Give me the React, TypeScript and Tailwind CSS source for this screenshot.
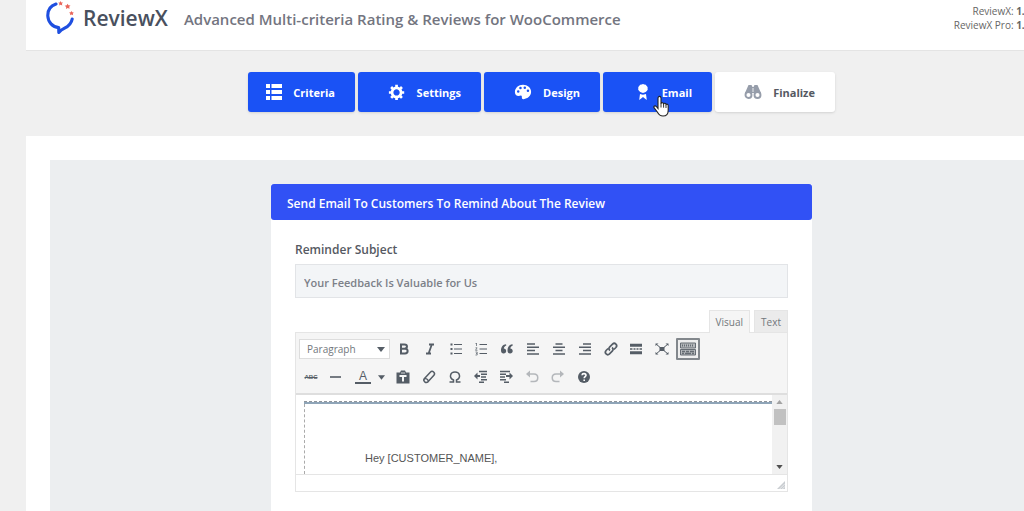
import type { ReactNode } from 'react';

type StepProps = { label: string; width: string; icon: ReactNode; active?: boolean };

function Step({ label, width, icon, active = true }: StepProps) {
  const tone = active ? 'bg-[#1a52f5] text-white' : 'bg-white text-[#555962]';
  return (
    <button
      type="button"
      className={`flex h-10 items-center justify-end gap-[11px] rounded-[3px] pr-5 text-[11px] leading-4 font-bold shadow-sm ${width} ${tone}`}
    >
      {icon}
      <span className="pt-[2px]">{label}</span>
    </button>
  );
}

const ListIcon = () => (
  <svg viewBox="0 0 16 16" className="h-4 w-4" fill="currentColor" aria-hidden="true">
    <path d="M0 0h4v4H0zM5.500 0H16v4H5.500zM0 6h4v4H0zM5.500 6H16v4H5.500zM0 12h4v4H0zM5.500 12H16v4H5.500z" />
  </svg>
);

const GearIcon = () => (
  <svg viewBox="0 0 20 20" className="h-[18px] w-[18px]" fill="currentColor" aria-hidden="true">
    <path d="M18 12h-2.180c-.17.700-.44 1.350-.81 1.930l1.540 1.540-2.100 2.100-1.540-1.540c-.58.360-1.230.630-1.910.790V19H8v-2.180c-.68-.16-1.330-.43-1.910-.79l-1.540 1.540-2.120-2.120 1.540-1.540c-.36-.58-.63-1.230-.79-1.910H1V9.030h2.170c.16-.7.440-1.350.800-1.940L2.430 5.550l2.100-2.100 1.540 1.540c.58-.37 1.240-.64 1.930-.81V2h3v2.180c.68.160 1.330.430 1.910.790l1.540-1.540 2.120 2.120-1.540 1.540c.36.590.640 1.240.800 1.940H18V12zm-8.500 2c1.900 0 3.500-1.600 3.500-3.500S11.400 7 9.500 7 6 8.600 6 10.500 7.600 14 9.500 14z" />
  </svg>
);

const PaletteIcon = () => (
  <svg viewBox="0 0 20 20" className="h-[18px] w-[18px]" fill="currentColor" aria-hidden="true">
    <path fillRule="evenodd" d="M10 2C5 2 1 5.600 1 10c0 3 1.700 4.500 4 4.500 1.500 0 2.400-.8 3.200-.4 1 .5.200 2 .7 3.100.4.700 1 .9 1.700.8C15.300 17.500 19 14.200 19 9.800 19 5.200 15 2 10 2zM4.700 8a1.400 1.400 0 1 0 0 2.800 1.400 1.400 0 0 0 0-2.800zM7.200 4.200a1.400 1.400 0 1 0 0 2.800 1.400 1.400 0 0 0 0-2.800zM12 4a1.400 1.400 0 1 0 0 2.800A1.400 1.400 0 0 0 12 4zM15.500 7.200a1.400 1.400 0 1 0 0 2.800 1.400 1.400 0 0 0 0-2.800z" />
  </svg>
);

const AwardIcon = () => (
  <svg viewBox="0 0 16 16" className="h-4 w-4" fill="currentColor" aria-hidden="true">
    <path d="M8 0l1.300.5 1.500.2.900 1.200.9 1.200v1.500l.1 1.200-.9 1.300-1.100 1-1.300.5L8 9.100l-1.400-.5-1.400-.5-1-1-1-1.300.1-1.200V3.100l.9-1.200.9-1.200L6.700.5z" />
    <path d="M5 10l3 .8 3-.8.800 6-2.300-1.800L8 13l-1.500 1.200L4.200 16z" />
  </svg>
);

const BinocularsIcon = () => (
  <svg viewBox="0 0 18 16" className="h-4 w-[18px]" aria-hidden="true">
    <path fill="#969daa" d="M4.500 1h3l1 2h1l1-2h3L17 9v3h-6V9H7v3H1V9z" />
    <circle cx="4.500" cy="11" r="3" fill="#fff" stroke="#969daa" strokeWidth="1.900" />
    <circle cx="13.500" cy="11" r="3" fill="#fff" stroke="#969daa" strokeWidth="1.900" />
    <path d="M9 4v4" stroke="#fff" strokeWidth=".8" />
  </svg>
);

const Logo = () => (
  <svg viewBox="0 0 28 34" className="h-[34px] w-7" aria-hidden="true">
    <path d="M10 4C4.500 5.800 1.600 10.500 1.800 16c.3 6 4.700 11 10.900 11.600L12.800 32.500c1.700-2 3.200-3 5.800-4.300 4.500-2.300 7-5.600 7.600-9.200" fill="none" stroke="#1f4fe0" strokeWidth="3.100" strokeLinecap="round" strokeLinejoin="round" />
    <path fill="#e9655a" d="M14.500 1l.8 1.400 1.700.2-1.100 1.200.4 1.700-1.700-.7-1.500.7.300-1.700L12.300 2.600l1.500-.2zM21.500 3.800l1 1.500 2 .1-1.300 1.400.4 2-1.900-.8-1.700 1 .2-2-1.500-1.300 2-.4zM25.500 11l.8 1.300 1.500.2-1 1.200.3 1.600-1.500-.7-1.500.7.200-1.600-1.200-1.200 1.600-.2z" />
  </svg>
);

const Cursor = () => (
  <svg viewBox="0 0 16 22" className="pointer-events-none absolute top-[23px] left-[50px] h-[22px] w-4" aria-hidden="true">
    <path d="M5 13.500V3.200C5 .8 8 .8 8 3.200v5.300c.4-1.300 2.500-1 2.600.4.600-1 2.300-.7 2.400.6.900-.7 2.200-.2 2.200 1.200v4.500c0 3.500-1.700 5.800-5.200 5.800-3 0-4.300-1.500-5.500-3.800L1 12.700c-.7-1.600 1.200-2.500 2.300-1.200z" fill="#fff" stroke="#222" strokeWidth="1.100" />
    <path d="M8 8v4.500M10.600 9v3.700M13 10v3" stroke="#333" strokeWidth="1" />
  </svg>
);

function Tool({ name, children }: { name: string; children: ReactNode }) {
  return (
    <button type="button" aria-label={name} title={name} className="flex h-6 w-6 items-center justify-center text-[#555d66]">
      <svg viewBox="0 0 16 16" className="h-4 w-4" fill="none" stroke="currentColor" strokeWidth="1.500" aria-hidden="true">
        {children}
      </svg>
    </button>
  );
}

function ToolbarTop() {
  return (
    <div className="flex items-center">
      <div className="relative mr-[2px] flex items-center">
        <select aria-label="Block format" className="h-5 w-[91px] appearance-none border border-[#dddddd] bg-white pl-[7px] text-[10px] leading-4 text-[#72777c]">
          <option>Paragraph</option>
        </select>
        <svg viewBox="0 0 8 5" className="pointer-events-none absolute right-[5px] h-[5px] w-2" fill="#555d66" aria-hidden="true">
          <path d="M0 0h8L4 5z" />
        </svg>
      </div>
      <div className="flex w-[308px] items-center justify-between">
        <Tool name="Bold">
          <path d="M5 3.500h3.500c3.300 0 3.300 4.200 0 4.200H5zM5 7.700h4c3.500 0 3.500 4.800 0 4.800H5z" strokeWidth="2" />
        </Tool>
        <Tool name="Italic">
          <path d="M7 3.500h5M4 12.500h5M9.800 3.500l-3.200 9" strokeWidth="1.800" />
        </Tool>
        <Tool name="Bulleted list">
          <path d="M6 3.500h8M6 8h8M6 12.500h8" strokeWidth="1" />
          <path d="M2.500 3.500h2M2.500 8h2M2.500 12.500h2" strokeWidth="1.800" />
        </Tool>
        <Tool name="Numbered list">
          <path d="M6.500 3.500h7.500M6.500 8h7.500M6.500 12.500h7.500" strokeWidth="1" />
          <path d="M3.500 2v3M2.500 2.500h1M2.500 6.800h1.600L2.500 9.300h2M2.500 11h1.700v3H2.500M3 12.500h1" strokeWidth=".7" />
        </Tool>
        <Tool name="Blockquote">
          <path d="M7 3.200C4 3.500 2 5.700 2 9.500c0 1.800 1 3 2.600 3s2.600-1 2.600-2.500S6.200 7.500 4.800 7.500C5 6 5.800 5 7.300 4.500zM13.500 3.200c-3 .3-5 2.500-5 6.300 0 1.800 1 3 2.600 3s2.600-1 2.600-2.500-1-2.500-2.400-2.500c.2-1.500 1-2.500 2.500-3z" fill="currentColor" stroke="none" />
        </Tool>
        <Tool name="Align left">
          <path d="M2 3h8M2 6.300h12M2 9.600h8M2 13h12" />
        </Tool>
        <Tool name="Align center">
          <path d="M4.500 3h7M2 6.300h12M4.500 9.600h7M2 13h12" />
        </Tool>
        <Tool name="Align right">
          <path d="M6 3h8M2 6.300h12M6 9.600h8M2 13h12" />
        </Tool>
        <Tool name="Insert link">
          <path d="M7 9.500c-1.500-1.200-1.200-2.700-.2-3.700l2.700-2.700c2.300-2.200 5.600 1 3.400 3.400l-2 2M9 6.500c1.500 1.200 1.200 2.700.2 3.700l-2.700 2.700c-2.300 2.200-5.600-1-3.400-3.400l2-2" strokeWidth="1.700" />
        </Tool>
        <Tool name="Insert read more tag">
          <path d="M2 4.200h12M2 11.800h12" strokeWidth="3" />
          <path d="M2 8h2.500M5.500 8h2M8.500 8h2M11.500 8H14" strokeWidth="1.300" />
        </Tool>
        <Tool name="Fullscreen">
          <path d="M2 3l12 10M14 3L2 13" strokeWidth="1" />
          <path d="M5.500 6h5v4h-5zM1.500 2.500H4.500L1.500 5zM14.500 2.500h-3l3 2.500zM1.500 13.500h3l-3-2.500zM14.500 13.500h-3l3-2.500z" fill="currentColor" stroke="none" />
        </Tool>
        <button type="button" aria-label="Toolbar toggle" title="Toolbar toggle" aria-pressed="true" className="flex h-[22px] w-6 items-center justify-center rounded-[1px] border-2 border-[#82878c] bg-[#eeeeee] text-[#666c73]">
          <svg viewBox="0 0 16 14" className="h-[14px] w-4" fill="none" stroke="currentColor" aria-hidden="true">
            <path d="M.5 1h15v5H.5zM.5 7.500h15v5.500H.5z" fill="#b5b8bb" />
            <path d="M2 3.500h12" strokeDasharray="1 1" strokeWidth="2" />
            <path d="M2 9.500h3M6 9.500h3M10 9.500h4M2 11.500h2M5 11.500h6M12 11.500h2" strokeWidth="1.300" />
          </svg>
        </button>
      </div>
    </div>
  );
}

function ToolbarBottom() {
  return (
    <div className="flex items-center">
      <div className="flex w-[90px] items-center">
        <button type="button" aria-label="Strikethrough" className="flex h-6 w-6 items-center justify-center text-[#555d66]">
          <span className='font-["Liberation_Sans",sans-serif] text-[6px] leading-none font-bold line-through'>ABC</span>
        </button>
        <Tool name="Horizontal line">
          <path d="M3 8h11" strokeWidth="1.600" />
        </Tool>
        <button type="button" aria-label="Text color" className="ml-1 flex h-6 w-6 flex-col items-center justify-center text-[#555d66]">
          <span className='font-["Liberation_Sans",sans-serif] text-[12px] leading-3'>A</span>
          <span className="h-[2px] w-4 bg-[#555d66]" />
        </button>
        <button type="button" aria-label="Text color options" className="flex h-6 w-3 items-center justify-center">
          <svg viewBox="0 0 8 5" className="h-[5px] w-[7px]" fill="#555d66" aria-hidden="true">
            <path d="M0 0h8L4 5z" />
          </svg>
        </button>
      </div>
      <div className="ml-[2px] flex w-[205px] justify-between">
        <Tool name="Paste as text">
          <path d="M1.500 3.500H5L6 1.500h4l1 2h3.500v11h-13z" fill="currentColor" stroke="none" />
          <path d="M4.500 7h7M8 7v5.500" stroke="#f5f5f5" strokeWidth="2" />
          <path d="M6 4h4" stroke="#f5f5f5" strokeWidth=".8" />
        </Tool>
        <Tool name="Clear formatting">
          <path d="M9.300 3.200c1-1 2.300-1.100 3.300-.2 1.100 1 1.200 2.200.3 3.300l-5.700 6.300c-1 1-2.300 1.200-3.500.2-1.100-1-1.100-2.300-.2-3.300z" strokeWidth="1.500" />
          <path d="M3.600 9.600c2.200-.2 3.600 1 3.900 3" strokeWidth="1.300" />
        </Tool>
        <Tool name="Special character">
          <path d="M2.500 13h4v-2C1.500 8.500 3.200 3 8 3s6.500 5.500 1.500 8v2h4" />
        </Tool>
        <Tool name="Decrease indent">
          <path d="M6 2.500h8M8 5.200h6M8 8h5M8 10.700h6M6 13.300h5" />
          <path d="M2.500 7H7" strokeWidth="2" />
          <path d="M1 7l3.500-3.500v7z" fill="currentColor" stroke="none" />
        </Tool>
        <Tool name="Increase indent">
          <path d="M2 2.500h10M2 5.200h6M2 8h5M2 10.700h6M6 13.300h5" />
          <path d="M8 7h5" strokeWidth="2" />
          <path d="M15 7l-3.500-3.500v7z" fill="currentColor" stroke="none" />
        </Tool>
        <Tool name="Undo">
          <g opacity=".4">
            <path d="M4 5h6c5 0 5 7.500 0 7.500H6.500" />
            <path d="M2 5l4-3.500v7z" fill="currentColor" stroke="none" />
          </g>
        </Tool>
        <Tool name="Redo">
          <g opacity=".4">
            <path d="M12 5H6c-5 0-5 7.500 0 7.500h3.500" />
            <path d="M14 5l-4-3.500v7z" fill="currentColor" stroke="none" />
          </g>
        </Tool>
        <Tool name="Keyboard shortcuts">
          <circle cx="8" cy="8" r="6" fill="currentColor" stroke="none" />
          <path d="M6 6.300c.2-2.400 4-2.100 4 0C10 7.700 8.200 7.700 8.200 9.300M8.200 10.500v1.600" stroke="#fff" strokeWidth="1.600" />
        </Tool>
      </div>
    </div>
  );
}

function Editor() {
  return (
    <div className="mt-3">
      <div className="flex justify-end gap-1 text-[10px] leading-4 text-[#72777c]">
        <button type="button" className="relative -mb-px h-[23px] border border-b-0 border-[#e5e5e5] bg-[#f5f5f5] px-[6px]">Visual</button>
        <button type="button" className="h-[22px] border border-b-0 border-[#e5e5e5] bg-[#ebebeb] px-[6px]">Text</button>
      </div>
      <div className="border border-[#e5e5e5]">
        <div className="flex flex-col gap-1 border-b-2 border-[#dedede] bg-[#f5f5f5] px-[3px] py-1">
          <ToolbarTop />
          <ToolbarBottom />
        </div>
        <div className="flex h-[79px] overflow-hidden">
          <div className="flex flex-1 flex-col pt-[6px] pl-2">
            <div className="border-t border-dashed border-[#8f959c]" />
            <div className="flex-1 border-t-2 border-t-[#8fa5b8]">
              <div className="h-full border-l border-dashed border-[#aaaaaa] pt-[46px] pl-[60px]">
                <p className='font-["Liberation_Sans",sans-serif] text-[11px] leading-4 text-[#555555]'>Hey [CUSTOMER_NAME],</p>
              </div>
            </div>
          </div>
          <div className="flex w-[15px] flex-col items-center bg-[#f1f1f1] py-[5px]">
            <svg viewBox="0 0 8 5" className="h-1 w-[7px]" fill="#a3a3a3" aria-hidden="true">
              <path d="M0 5h8L4 0z" />
            </svg>
            <div className="mt-[5px] h-4 w-3 bg-[#c1c1c1]" />
            <svg viewBox="0 0 8 5" className="mt-auto h-1 w-[7px]" fill="#505050" aria-hidden="true">
              <path d="M0 0h8L4 5z" />
            </svg>
          </div>
        </div>
        <div className="flex h-[17px] items-end justify-end border-t border-[#e5e5e5] p-[2px]">
          <svg viewBox="0 0 9 9" className="h-2 w-2" fill="#c9cdd1" aria-hidden="true">
            <path d="M0 9L9 0v9z" />
            <path d="M3 9l6-6M6 9l3-3" stroke="#fff" strokeWidth=".7" />
          </svg>
        </div>
      </div>
    </div>
  );
}

export default function App() {
  return (
    <div className='flex min-h-screen flex-col overflow-hidden bg-[#f0f0f0] pl-[26px] font-["Open_Sans","Noto_Sans",sans-serif]'>
      <div className="-mr-[33px] flex flex-1 flex-col">
        <header className="flex h-[51px] items-start border-b border-[#e4e4e4] bg-white pr-[18px] pl-5">
          <Logo />
          <span className="mt-[6px] ml-[9px] text-[21px] leading-6 font-semibold text-[#49505e]">ReviewX</span>
          <h1 className="mt-[7px] ml-4 text-[15px] leading-6 font-semibold text-[#737580]">
            Advanced Multi-criteria Rating &amp; Reviews for WooCommerce
          </h1>
          <div className="mt-1 ml-auto text-right text-[10px] leading-[14px] text-[#666666]">
            <p>ReviewX: <b>1.2.6</b></p>
            <p>ReviewX Pro: <b>1.0.6</b></p>
          </div>
        </header>

        <nav className="mt-[21px] flex justify-center gap-[3px]" aria-label="Setup steps">
          <Step label="Criteria" width="w-[107px]" icon={<ListIcon />} />
          <Step label="Settings" width="w-[123px]" icon={<GearIcon />} />
          <Step label="Design" width="w-[116px]" icon={<PaletteIcon />} />
          <div className="relative">
            <Step label="Email" width="w-[109px]" icon={<AwardIcon />} />
            <Cursor />
          </div>
          <Step label="Finalize" width="w-[120px]" icon={<BinocularsIcon />} active={false} />
        </nav>

        <main className="mt-6 flex flex-1 flex-col bg-white px-6 pt-6">
          <div className="flex flex-1 justify-center bg-[#eceef0] pt-6">
            <section className="w-full max-w-[541px] bg-white">
              <h2 className="rounded-[3px] bg-[#3151f5] px-4 pt-3 pb-2 text-[12px] leading-4 font-semibold text-white">
                Send Email To Customers To Remind About The Review
              </h2>
              <div className="px-6 pt-[22px] pb-4">
                <label htmlFor="subject" className="block text-[12px] leading-4 font-semibold text-[#555962]">
                  Reminder Subject
                </label>
                <input
                  id="subject"
                  type="text"
                  defaultValue="Your Feedback Is Valuable for Us"
                  className="mt-[6px] block h-[34px] w-full border border-[#e2e4e7] bg-[#f3f5f7] px-2 pt-[2px] text-[11px] leading-4 font-semibold text-[#7c8088]"
                />
                <Editor />
              </div>
            </section>
          </div>
        </main>
      </div>
    </div>
  );
}
